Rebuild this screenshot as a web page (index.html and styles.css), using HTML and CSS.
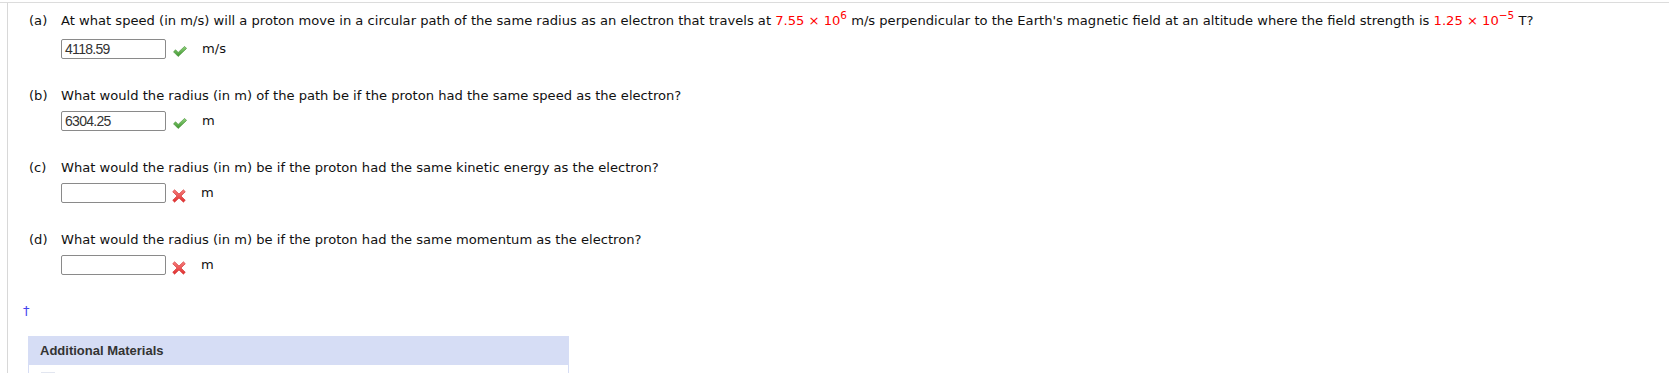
FILE: index.html
```html
<!DOCTYPE html>
<html>
<head>
<meta charset="utf-8">
<link rel="stylesheet" href="styles.css">
</head>
<body>
<svg width="0" height="0" class="defs">
  <defs>
    <linearGradient id="gcheck" x1="0" y1="0" x2="0" y2="1">
      <stop offset="0" stop-color="#8fd27a"/>
      <stop offset="1" stop-color="#3f9630"/>
    </linearGradient>
    <linearGradient id="gx" x1="0" y1="0" x2="0" y2="1">
      <stop offset="0" stop-color="#f7807f"/>
      <stop offset="1" stop-color="#e02e2e"/>
    </linearGradient>
  </defs>
</svg>
<div class="page">
  <div class="panel">
    <div class="part part-a">
      <div class="question">
        <span class="label">(a)</span>
        <span class="qtext">At what speed (in m/s) will a proton move in a circular path of the same radius as an electron that travels at <span class="num">7.55 × 10<sup>6</sup></span> m/s perpendicular to the Earth's magnetic field at an altitude where the field strength is <span class="num">1.25 × 10<sup>−5</sup></span> T?</span>
      </div>
      <div class="answer">
        <div class="box">4118.59</div>
        <svg class="icon icon-check" width="14" height="11" viewBox="0 0 14 11"><path d="M0.5 5.8 L2.6 3.8 L5.2 6.4 L11.6 0.4 L13.6 2.4 L5.2 10.5 Z" fill="url(#gcheck)" stroke="#3b8a2c" stroke-width="0.6" stroke-linejoin="round"/></svg>
        <span class="unit">m/s</span>
      </div>
    </div>
    <div class="part">
      <div class="question">
        <span class="label">(b)</span>
        <span class="qtext">What would the radius (in m) of the path be if the proton had the same speed as the electron?</span>
      </div>
      <div class="answer">
        <div class="box">6304.25</div>
        <svg class="icon icon-check" width="14" height="11" viewBox="0 0 14 11"><path d="M0.5 5.8 L2.6 3.8 L5.2 6.4 L11.6 0.4 L13.6 2.4 L5.2 10.5 Z" fill="url(#gcheck)" stroke="#3b8a2c" stroke-width="0.6" stroke-linejoin="round"/></svg>
        <span class="unit">m</span>
      </div>
    </div>
    <div class="part">
      <div class="question">
        <span class="label">(c)</span>
        <span class="qtext">What would the radius (in m) be if the proton had the same kinetic energy as the electron?</span>
      </div>
      <div class="answer">
        <div class="box"></div>
        <svg class="icon icon-x" width="14" height="14" viewBox="0 0 14 14"><path d="M2.6 0.8 L7 5 L11.4 0.8 L13.3 2.7 L9 7 L13.3 11.3 L11.4 13.2 L7 9 L2.6 13.2 L0.7 11.3 L5 7 L0.7 2.7 Z" fill="url(#gx)" stroke="#d02a2a" stroke-width="0.6" stroke-linejoin="round"/></svg>
        <span class="unit">m</span>
      </div>
    </div>
    <div class="part">
      <div class="question">
        <span class="label">(d)</span>
        <span class="qtext">What would the radius (in m) be if the proton had the same momentum as the electron?</span>
      </div>
      <div class="answer">
        <div class="box"></div>
        <svg class="icon icon-x" width="14" height="14" viewBox="0 0 14 14"><path d="M2.6 0.8 L7 5 L11.4 0.8 L13.3 2.7 L9 7 L13.3 11.3 L11.4 13.2 L7 9 L2.6 13.2 L0.7 11.3 L5 7 L0.7 2.7 Z" fill="url(#gx)" stroke="#d02a2a" stroke-width="0.6" stroke-linejoin="round"/></svg>
        <span class="unit">m</span>
      </div>
    </div>
    <div class="dagger">†</div>
    <div class="materials">
      <div class="materials-head">Additional Materials</div>
      <div class="materials-body"><span class="mat-icon"></span></div>
    </div>
  </div>
</div>
</body>
</html>
```
FILE: styles.css
```css
html, body {
  margin: 0;
  padding: 0;
  background: #fff;
}
.defs {
  position: absolute;
  width: 0;
  height: 0;
}
.page {
  border-top: 1px solid #dcdcdc;
  margin-top: 2px;
  height: 370px;
  overflow: hidden;
}
.panel {
  margin-left: 7px;
  border-left: 1px solid #d8d8d8;
  height: 370px;
  padding-left: 21px;
  font-family: "DejaVu Sans", Verdana, sans-serif;
  font-size: 13.1px;
  color: #111;
}
.part-a {
  padding-top: 10px;
}
.part + .part {
  padding-top: 29px;
}
.question {
  display: flex;
  line-height: 16px;
}
.label {
  width: 32px;
  flex: none;
}
.qtext {
  white-space: nowrap;
}
.num {
  color: #f00;
}
sup {
  font-size: 10.5px;
  line-height: 0;
  vertical-align: 6px;
}
.answer {
  display: flex;
  align-items: center;
  margin-left: 32px;
  margin-top: 7px;
  height: 20px;
}
.part-a .answer {
  margin-top: 10px;
}
.box {
  width: 100px;
  height: 18px;
  border: 1px solid #8a8a8a;
  border-radius: 2px;
  font-family: "Liberation Sans", Arial, sans-serif;
  font-size: 14px;
  letter-spacing: -0.7px;
  line-height: 19px;
  color: #333;
  padding-left: 3px;
}
.icon {
  flex: none;
  align-self: flex-end;
}
.icon-check {
  margin-left: 7px;
  margin-bottom: 2px;
}
.icon-x {
  margin-left: 6px;
}
.unit {
  margin-left: 15px;
  line-height: 16px;
  color: #111;
}
.dagger {
  margin-top: 29px;
  margin-left: -6px;
  color: #4444ee;
  font-size: 13px;
  line-height: 13px;
  height: 13px;
}
.materials {
  margin-top: 19px;
  margin-left: -1px;
  width: 539px;
  border-left: 1px solid #d6ddf5;
  border-right: 1px solid #d6ddf5;
}
.materials-head {
  background: #d6ddf5;
  height: 29px;
  line-height: 29px;
  padding-left: 11px;
  font-family: "Liberation Sans", Arial, sans-serif;
  font-weight: bold;
  font-size: 13px;
  color: #333;
}
.materials-body {
  height: 30px;
  padding: 7px 0 0 12px;
}
.mat-icon {
  display: block;
  width: 14px;
  height: 4px;
  background: #e2e6f0;
}
```
